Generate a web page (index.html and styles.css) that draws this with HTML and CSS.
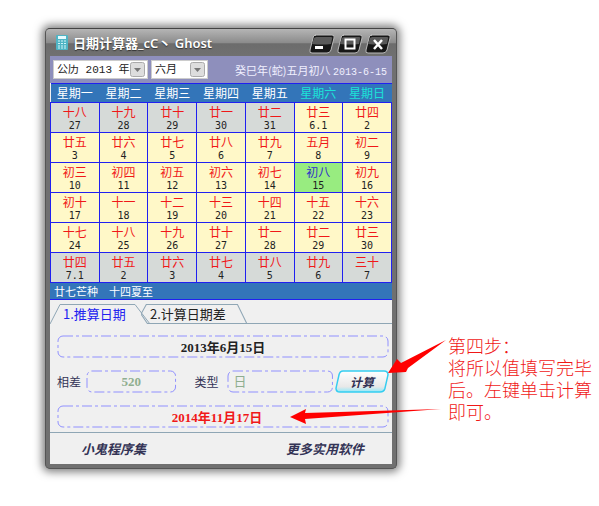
FILE: index.html
```html
<!DOCTYPE html>
<html lang="zh-CN">
<head>
  <meta charset="UTF-8" />
  <meta name="viewport" content="width=device-width, initial-scale=1.0" />
  <title>日期计算器</title>
  <link rel="stylesheet" href="styles.css">
</head>
<body>
  <main class="window">
    <header class="titlebar">
      <svg class="app-icon" viewBox="0 0 12 15" width="12" height="15">
        <rect x="0" y="0" width="12" height="15" rx="1" fill="#4fb4c4"/>
        <rect x="2" y="1" width="8" height="3" fill="#e6fbff"/>
        <path d="M2 6h8M2 8.500h8M2 11h8M2 13h8" stroke="#d4f4f8" stroke-width="1" stroke-dasharray="2 1"/>
      </svg>
      <h1>日期计算器_cC丶 Ghost</h1>
      <div class="controls">
        <button type="button" aria-label="最小化">
          <svg viewBox="0 0 28 20" width="28" height="20">
            <path class="key" d="M7 1h17q3 0 2 3l-3 12q-1 3-4 3H4q-3 0-2-3L5 4q0-3 3-3z"/>
            <path class="shine" d="M8 3h15q2 0 1 2l-1 5q-9 1-19 0l2-6z"/>
            <path d="M7 13.500h8" stroke="#fff" stroke-width="3"/>
          </svg>
        </button>
        <button type="button" aria-label="最大化">
          <svg viewBox="0 0 28 20" width="28" height="20">
            <path class="key" d="M7 1h17q3 0 2 3l-3 12q-1 3-4 3H4q-3 0-2-3L5 4q0-3 3-3z"/>
            <path class="shine" d="M8 3h15q2 0 1 2l-1 5q-9 1-19 0l2-6z"/>
            <rect x="9.500" y="5.500" width="9" height="9" fill="none" stroke="#fff" stroke-width="2"/>
          </svg>
        </button>
        <button type="button" aria-label="关闭">
          <svg viewBox="0 0 28 20" width="28" height="20">
            <path class="key" d="M7 1h17q3 0 2 3l-3 12q-1 3-4 3H4q-3 0-2-3L5 4q0-3 3-3z"/>
            <path class="shine" d="M8 3h15q2 0 1 2l-1 5q-9 1-19 0l2-6z"/>
            <path d="M10 6l8 9M18 6l-8 9" stroke="#fff" stroke-width="2.500"/>
          </svg>
        </button>
      </div>
    </header>

    <div class="content">
      <div class="toolbar">
        <div class="combo combo-year">
          <select aria-label="年份"><option>公历 2013 年</option></select>
          <svg viewBox="0 0 15 15" width="15" height="15"><rect x=".5" y=".5" width="14" height="14" rx="2" fill="#ddd" stroke="#aaa"/><path d="M4 6h7l-3.500 4z" fill="#777"/></svg>
        </div>
        <div class="combo combo-month">
          <select aria-label="月份"><option>六月</option></select>
          <svg viewBox="0 0 15 15" width="15" height="15"><rect x=".5" y=".5" width="14" height="14" rx="2" fill="#ddd" stroke="#aaa"/><path d="M4 6h7l-3.500 4z" fill="#777"/></svg>
        </div>
        <div class="lunar-date">癸巳年(蛇)五月初八 <span>2013-6-15</span></div>
      </div>

      <table class="calendar">
        <thead>
          <tr><th>星期一</th><th>星期二</th><th>星期三</th><th>星期四</th><th>星期五</th><th class="weekend">星期六</th><th class="weekend">星期日</th></tr>
        </thead>
        <tbody id="days">
          <!-- Weeks injected by JS -->
        </tbody>
      </table>
      <div class="terms">廿七芒种　十四夏至</div>

      <div class="tabs" role="tablist">
        <button type="button" class="tab active" role="tab" aria-selected="true">
          <svg viewBox="0 0 100 20" preserveAspectRatio="none"><path d="M0 20L10 .5H85L100 20"/></svg>
          <span>1.推算日期</span>
        </button>
        <button type="button" class="tab" role="tab" aria-selected="false">
          <svg viewBox="0 0 100 20" preserveAspectRatio="none"><path d="M0 10L5 .5H91L100 20M0 10L6 19.500H100"/></svg>
          <span>2.计算日期差</span>
        </button>
        <span class="tab-line"></span>
      </div>

      <form class="panel">
        <div class="field">
          <svg class="frame"><rect x="1" y="1" rx="5"/></svg>
          <input class="date" type="text" value="2013年6月15日" aria-label="起始日期">
        </div>
        <div class="row">
          <label for="diff">相差</label>
          <div class="field diff">
            <svg class="frame"><rect x="1" y="1" rx="5"/></svg>
            <input id="diff" type="text" value="520">
          </div>
          <label class="type-label" for="type">类型</label>
          <div class="field type">
            <svg class="frame"><rect x="1" y="1" rx="5"/></svg>
            <select id="type"><option>日</option></select>
          </div>
          <div class="calc">
            <button type="button">
              <svg viewBox="0 0 54 24" preserveAspectRatio="none">
                <defs><linearGradient id="face" x2="0" y2="1"><stop offset="0" stop-color="#fff"/><stop offset=".75" stop-color="#e8e8e8"/><stop offset="1" stop-color="#8fe9fa"/></linearGradient></defs>
                <path d="M8 1h41q4 0 4 4l-3 14q-1 4-5 4H5q-4 0-4-4L4 5q1-4 4-4z" fill="url(#face)" stroke="#35cdf0" stroke-width="1.500"/>
              </svg>
              <span>计算</span>
            </button>
            <svg class="arrow arrow-calc" viewBox="0 0 60 36" width="60" height="36"><path d="M1 34L10 20L14 24L59 1L21 29L19 33z" fill="#f00"/></svg>
          </div>
        </div>
        <div class="field">
          <svg class="frame"><rect x="1" y="1" rx="5"/></svg>
          <input class="date result" type="text" value="2014年11月17日" aria-label="计算结果" readonly>
          <svg class="arrow arrow-result" viewBox="0 0 152 18" width="152" height="18"><path d="M0 10L16 2L15 6L151 2L15 12L16 17z" fill="#f00"/></svg>
        </div>
      </form>

      <footer class="footer">
        <a href="#">小鬼程序集</a>
        <a href="#">更多实用软件</a>
      </footer>
    </div>
  </main>

  <aside class="note">第四步：<br>将所以值填写完毕后。左键单击计算即可。</aside>

  <script>
    const weeks = [
      [['十八', '27'], ['十九', '28'], ['廿十', '29'], ['廿一', '30'], ['廿二', '31'], ['廿三', '6.1'], ['廿四', '2']],
      [['廿五', '3'], ['廿六', '4'], ['廿七', '5'], ['廿八', '6'], ['廿九', '7'], ['五月', '8'], ['初二', '9']],
      [['初三', '10'], ['初四', '11'], ['初五', '12'], ['初六', '13'], ['初七', '14'], ['初八', '15'], ['初九', '16']],
      [['初十', '17'], ['十一', '18'], ['十二', '19'], ['十三', '20'], ['十四', '21'], ['十五', '22'], ['十六', '23']],
      [['十七', '24'], ['十八', '25'], ['十九', '26'], ['廿十', '27'], ['廿一', '28'], ['廿二', '29'], ['廿三', '30']],
      [['廿四', '7.1'], ['廿五', '2'], ['廿六', '3'], ['廿七', '4'], ['廿八', '5'], ['廿九', '6'], ['三十', '7']]
    ];

    // days outside of June are grey
    function cellClass(week, day) {
      if ((week === 0 && day < 5) || week === 5) return 'other';
      if (week === 2 && day === 5) return 'today';
      return '';
    }

    document.getElementById('days').innerHTML = weeks.map((days, w) =>
      '<tr>' + days.map(([lunar, solar], d) => `
        <td class="${cellClass(w, d)}"><div class="lunar">${lunar}</div><div class="solar">${solar}</div></td>`).join('') + '</tr>'
    ).join('');
  </script>
</body>
</html>
```

FILE: styles.css
```css
* {
  box-sizing: border-box;
}
body {
  margin: 0;
  padding: 28px 7px 28px 45px;
  display: flex;
  align-items: flex-start;
  gap: 51px;
  background: #fff;
  font-family: "Noto Sans CJK SC", sans-serif;
  font-size: 12px;
}
button, input, select {
  font: inherit;
  margin: 0;
  padding: 0;
  border: 0;
  background: none;
}
.window {
  flex: 1;
  min-width: 0;
  padding: 0 4px 4px;
  border: 1px solid #555;
  border-top-color: #444;
  border-radius: 5px;
  background: #707070;
  box-shadow: 0 0 9px 3px rgba(0, 0, 0, 0.5);
}
.titlebar {
  display: flex;
  align-items: center;
  height: 27px;
  margin: 0 -4px;
  padding: 0 4px 0 10px;
  border-radius: 4px 4px 0 0;
  background: linear-gradient(#b5b5b5, #8c8c8c 50%, #6c6c6c 55%, #707070);
}
.titlebar h1 {
  flex: 1;
  margin: 0 0 0 5px;
  color: #fff;
  font-family: "Noto Sans", "Noto Sans CJK SC", sans-serif;
  font-size: 13px;
  font-weight: 600;
  line-height: 20px;
  white-space: nowrap;
  text-shadow: 0 1px 1px #333;
}
.controls {
  display: flex;
  padding-top: 2px;
}
.controls button, .controls svg {
  display: block;
}
.key {
  fill: #171717;
  stroke: #bbb;
  stroke-width: 1;
}
.shine {
  fill: #5a5a5a;
}
.content {
  background: #f0f0f0;
}
.toolbar {
  display: flex;
  align-items: center;
  gap: 3px;
  height: 27px;
  padding: 0 5px 0 3px;
  background: #8e8fbc;
}
.combo {
  position: relative;
  height: 19px;
  border: 1px solid #ccc;
  background: #fff;
}
.combo-year {
  width: 95px;
}
.combo-month {
  width: 57px;
}
.combo select {
  display: block;
  width: 100%;
  height: 17px;
  padding-left: 3px;
  appearance: none;
  color: #222;
  font-family: "Liberation Mono", "Noto Sans CJK SC", monospace;
  font-size: 11px;
}
.combo svg {
  position: absolute;
  top: 1px;
  right: 2px;
  pointer-events: none;
}
.lunar-date {
  flex: 1;
  color: #f0f0ff;
  font-size: 11px;
  text-align: right;
  white-space: nowrap;
}
.lunar-date span {
  font-family: "Liberation Mono", monospace;
  font-size: 10px;
}
.calendar {
  width: 100%;
  table-layout: fixed;
  border-collapse: collapse;
  text-align: center;
}
.calendar th {
  height: 19px;
  padding: 0;
  border-top: 1px solid #2020f0;
  border-bottom: 1px solid #2020f0;
  background: #3375b9;
  color: #fff;
  font-weight: normal;
  line-height: 18px;
}
.calendar th.weekend {
  color: #1be3d8;
}
.calendar td {
  height: 30px;
  padding: 0;
  border: 1px solid #2020f0;
  background: #fff8c8;
}
.calendar td.other {
  background: #d6dad8;
}
.calendar td.today {
  background: #98ec80;
}
.lunar {
  color: #f01818;
  line-height: 16px;
}
.today .lunar {
  color: #3030c8;
}
.solar {
  color: #222;
  font-family: "DejaVu Sans Mono", monospace;
  font-size: 10px;
  line-height: 12px;
}
.terms {
  padding-left: 4px;
  border-bottom: 1px solid #2020f0;
  background: #3375b9;
  color: #fff;
  font-size: 11px;
  line-height: 16px;
}
.tabs {
  display: flex;
  height: 24px;
  padding-top: 4px;
}
.tab {
  position: relative;
  width: 100px;
  height: 20px;
  padding-left: 13px;
  color: #222;
  font-size: 13px;
  line-height: 18px;
  text-align: left;
  white-space: nowrap;
}
.tab.active {
  color: #2222f0;
}
.tab + .tab {
  width: 106px;
  margin-left: -9px;
  padding-left: 9px;
}
.tab svg {
  position: absolute;
  inset: 0;
  width: 100%;
  height: 100%;
  fill: none;
  stroke: #8fa6b5;
}
.tab span {
  position: relative;
}
.tab-line {
  flex: 1;
  border-bottom: 1px solid #8fa6b5;
}
.panel {
  display: flex;
  flex-direction: column;
  gap: 12px;
  padding: 11px 3px 4px 7px;
  border-bottom: 1px solid #8fa6b5;
}
.field {
  position: relative;
  height: 23px;
}
.frame {
  position: absolute;
  inset: 0;
  width: 100%;
  height: 100%;
  pointer-events: none;
}
.frame rect {
  width: calc(100% - 2px);
  height: calc(100% - 2px);
  fill: none;
  stroke: #9090ff;
  stroke-dasharray: 10 3 3 3;
}
.field input, .field select {
  display: block;
  width: 100%;
  height: 23px;
  appearance: none;
  text-align: center;
  color: #8fae8f;
  font-family: "Liberation Serif", "Noto Sans CJK SC", serif;
  font-weight: bold;
  font-size: 13px;
}
.field .date {
  color: #222;
}
.field .result {
  padding-right: 12px;
  color: #f01818;
}
.field select {
  padding-left: 7px;
  text-align: left;
  font-weight: normal;
}
.row {
  display: flex;
  align-items: center;
  height: 23px;
  color: #333355;
}
.diff {
  flex: 91;
  margin-left: 5px;
}
.type-label {
  margin-left: 18px;
}
.type {
  flex: 107;
  margin: 0 2px 0 8px;
}
.calc {
  position: relative;
}
.calc button {
  position: relative;
  display: block;
  width: 54px;
  height: 23px;
  color: #333355;
  font-style: italic;
  font-weight: bold;
}
.calc button svg {
  position: absolute;
  inset: 0;
  width: 100%;
  height: 100%;
}
.calc span {
  position: relative;
}
.arrow {
  position: absolute;
  pointer-events: none;
}
.arrow-calc {
  right: -58px;
  bottom: 18px;
}
.arrow-result {
  right: -53px;
  top: 2px;
}
.footer {
  display: flex;
  justify-content: space-between;
  padding: 0 28px 0 31px;
  line-height: 31px;
}
.footer a {
  color: #333355;
  font-size: 13px;
  font-style: italic;
  font-weight: bold;
  text-decoration: none;
}
.note {
  width: 144px;
  margin-top: 308px;
  color: #f01818;
  font-family: "Liberation Sans", "Noto Sans CJK SC", sans-serif;
  font-size: 18px;
  font-weight: 300;
  line-height: 22px;
}
```
